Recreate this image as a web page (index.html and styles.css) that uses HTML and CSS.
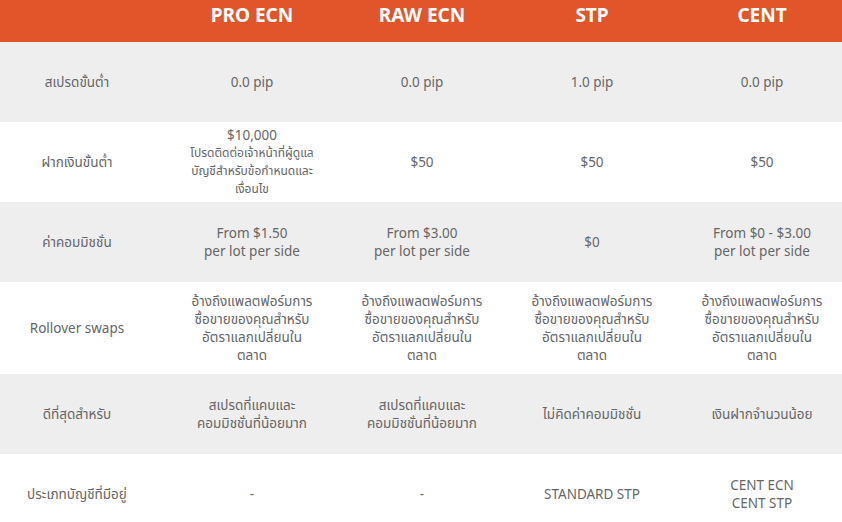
FILE: index.html
```html
<!DOCTYPE html>
<html lang="th">
<head>
<meta charset="utf-8">
<title>Account types</title>
<link rel="stylesheet" href="styles.css">
</head>
<body>
<div class="table">
  <div class="row head">
    <div class="cell label"></div>
    <div class="cell">PRO ECN</div>
    <div class="cell">RAW ECN</div>
    <div class="cell">STP</div>
    <div class="cell">CENT</div>
  </div>
  <div class="row grey">
    <div class="cell label">สเปรดขั้นต่ำ</div>
    <div class="cell">0.0 pip</div>
    <div class="cell">0.0 pip</div>
    <div class="cell">1.0 pip</div>
    <div class="cell">0.0 pip</div>
  </div>
  <div class="row">
    <div class="cell label">ฝากเงินขั้นต่ำ</div>
    <div class="cell"><div>$10,000</div><div class="note">โปรดติดต่อเจ้าหน้าที่ผู้ดูแล<br>บัญชีสำหรับข้อกำหนดและ<br>เงื่อนไข</div></div>
    <div class="cell">$50</div>
    <div class="cell">$50</div>
    <div class="cell">$50</div>
  </div>
  <div class="row grey">
    <div class="cell label">ค่าคอมมิชชั่น</div>
    <div class="cell">From $1.50<br>per lot per side</div>
    <div class="cell">From $3.00<br>per lot per side</div>
    <div class="cell">$0</div>
    <div class="cell">From $0 - $3.00<br>per lot per side</div>
  </div>
  <div class="row tall">
    <div class="cell label">Rollover swaps</div>
    <div class="cell">อ้างถึงแพลตฟอร์มการ<br>ซื้อขายของคุณสำหรับ<br>อัตราแลกเปลี่ยนใน<br>ตลาด</div>
    <div class="cell">อ้างถึงแพลตฟอร์มการ<br>ซื้อขายของคุณสำหรับ<br>อัตราแลกเปลี่ยนใน<br>ตลาด</div>
    <div class="cell">อ้างถึงแพลตฟอร์มการ<br>ซื้อขายของคุณสำหรับ<br>อัตราแลกเปลี่ยนใน<br>ตลาด</div>
    <div class="cell">อ้างถึงแพลตฟอร์มการ<br>ซื้อขายของคุณสำหรับ<br>อัตราแลกเปลี่ยนใน<br>ตลาด</div>
  </div>
  <div class="row grey">
    <div class="cell label">ดีที่สุดสำหรับ</div>
    <div class="cell">สเปรดที่แคบและ<br>คอมมิชชั่นที่น้อยมาก</div>
    <div class="cell">สเปรดที่แคบและ<br>คอมมิชชั่นที่น้อยมาก</div>
    <div class="cell">ไม่คิดค่าคอมมิชชั่น</div>
    <div class="cell">เงินฝากจำนวนน้อย</div>
  </div>
  <div class="row">
    <div class="cell label">ประเภทบัญชีที่มีอยู่</div>
    <div class="cell">-</div>
    <div class="cell">-</div>
    <div class="cell">STANDARD STP</div>
    <div class="cell">CENT ECN<br>CENT STP</div>
  </div>
</div>
</body>
</html>
```
FILE: styles.css
```css
html, body {
  margin: 0;
  padding: 0;
  background: #ffffff;
  overflow: hidden;
}
body {
  font-family: "Noto Sans", "Noto Sans Thai", "Liberation Sans", sans-serif;
  color: #666666;
  font-size: 13.5px;
}
.table {
  width: 847px;
}
.row {
  display: grid;
  grid-template-columns: 167px repeat(4, 170px);
  height: 80px;
}
.row.tall {
  height: 92px;
}
.row.grey {
  background: #eeeeee;
}
.cell {
  display: flex;
  flex-direction: column;
  align-items: center;
  justify-content: center;
  text-align: center;
  line-height: 18px;
}
.cell.label {
  padding-right: 13px;
}
.head {
  height: 42px;
  background: #e2552a;
}
.head .cell {
  justify-content: flex-start;
  padding-top: 4px;
  color: #ffffff;
  font-weight: 700;
  font-size: 19px;
  line-height: 22px;
}
.note {
  font-size: 12px;
  line-height: 18px;
}
```
